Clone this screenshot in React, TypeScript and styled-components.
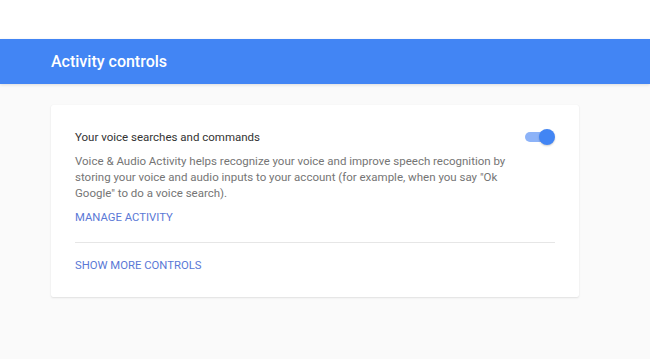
import styled, { createGlobalStyle } from "styled-components";

const GlobalStyle = createGlobalStyle`
  html, body {
    margin: 0;
    padding: 0;
    background: #fafafa;
    font-family: Roboto, "Liberation Sans", Arial, sans-serif;
  }
`;

function App() {
  return (
    <Page>
      <GlobalStyle />
      <TopSpace />
      <Header>
        <HeaderTitle>Activity controls</HeaderTitle>
      </Header>
      <Content>
        <Card>
          <Section>
            <SettingRow>
              <SettingTitle>Your voice searches and commands</SettingTitle>
              <Toggle>
                <Track />
                <Thumb />
              </Toggle>
            </SettingRow>
            <Description>
              Voice &amp; Audio Activity helps recognize your voice and improve
              speech recognition by storing your voice and audio inputs to your
              account (for example, when you say "Ok Google" to do a voice
              search).
            </Description>
            <LinkButton>Manage activity</LinkButton>
          </Section>
          <Divider />
          <Footer>
            <LinkButton>Show more controls</LinkButton>
          </Footer>
        </Card>
      </Content>
    </Page>
  );
}

const Page = styled.div`
  min-height: 359px;
  background: #fafafa;
`;

const TopSpace = styled.div`
  height: 39px;
  background: #ffffff;
`;

const Header = styled.div`
  height: 45px;
  background: #4285f4;
  display: flex;
  align-items: center;
  padding-left: 51px;
  box-shadow: 0 1px 3px rgba(0, 0, 0, 0.12);
`;

const HeaderTitle = styled.h1`
  margin: 0;
  color: #ffffff;
  font-size: 16px;
  font-weight: 500;
`;

const Content = styled.div`
  padding: 21px 0 0 51px;
`;

const Card = styled.div`
  width: 528px;
  box-sizing: border-box;
  background: #ffffff;
  border-radius: 2px;
  box-shadow: 0 1px 2px rgba(0, 0, 0, 0.1), 0 0 1px rgba(0, 0, 0, 0.06);
  padding: 0 24px;
`;

const Section = styled.div`
  padding: 24px 0 16px;
`;

const SettingRow = styled.div`
  display: flex;
  align-items: center;
  justify-content: space-between;
`;

const SettingTitle = styled.div`
  font-size: 11.5px;
  line-height: 16px;
  color: #333333;
`;

const Toggle = styled.div`
  position: relative;
  width: 31px;
  height: 16px;
`;

const Track = styled.div`
  position: absolute;
  left: 1px;
  top: 3px;
  width: 26px;
  height: 10px;
  border-radius: 5px;
  background: #8db3f8;
`;

const Thumb = styled.div`
  position: absolute;
  right: 0;
  top: 0;
  width: 16px;
  height: 16px;
  border-radius: 50%;
  background: #4285f4;
  box-shadow: 0 1px 2px rgba(0, 0, 0, 0.2);
`;

const Description = styled.p`
  margin: 8px 0 9px;
  font-size: 11.5px;
  line-height: 16px;
  color: #757575;
  max-width: 436px;
`;

const LinkButton = styled.div`
  font-size: 11.3px;
  line-height: 16px;
  color: #5a78d6;
  text-transform: uppercase;
  cursor: pointer;
`;

const Divider = styled.div`
  height: 1px;
  background: #e6e6e6;
`;

const Footer = styled.div`
  padding: 15px 0 23px;
`;

export default App;
